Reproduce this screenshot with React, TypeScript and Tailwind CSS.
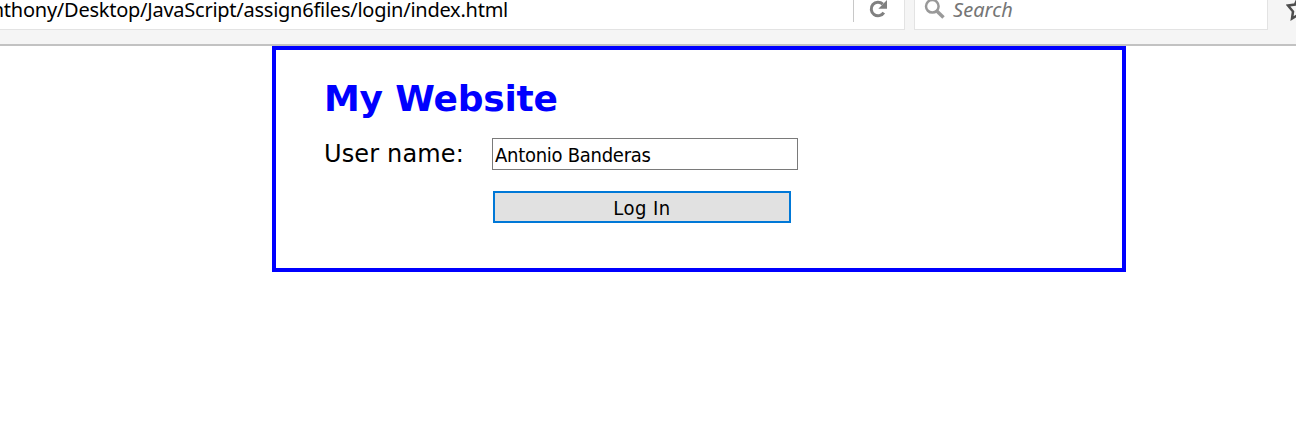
function Toolbar() {
  return (
    <header className="flex h-[46px] items-start overflow-hidden border-b-2 border-[#c2c2c2] bg-[#f5f5f5] font-['Noto_Sans',sans-serif] text-[20px] leading-[28px]">
      <div className="flex h-[30px] w-[905px] shrink-0 border-r border-b border-[#e3e3e3] bg-white">
        <div className="flex h-7 w-[508px] justify-end overflow-hidden whitespace-nowrap">
          <span className="-mt-[4px] tracking-[-0.25px] text-black">Anthony/Desktop/JavaScript/assign6files/login/index.html</span>
        </div>
        <div className="ml-auto flex h-[22px] w-[51px] border-l border-[#c8c8c8]">
          <svg className="ml-[15px] h-[20px] w-[20px]" viewBox="0 0 20 20" fill="none">
            <path d="M14.8 12.6A6.8 6.8 0 1 1 13.8 4.1" stroke="#808080" strokeWidth="3" />
            <path d="M18 0V8.7H9.3Z" fill="#808080" />
          </svg>
        </div>
      </div>
      <div className="ml-[9px] flex h-[30px] w-[354px] shrink-0 border-x border-b border-[#e3e3e3] bg-white">
        <svg className="ml-[9px] h-[20px] w-[22px] shrink-0" viewBox="0 0 22 20" fill="none" stroke="#999">
          <circle cx="8.3" cy="6.3" r="6.3" strokeWidth="2.5" />
          <path d="M12.8 11L19.5 17.5" strokeWidth="3.5" />
        </svg>
        <span className="-mt-[4px] ml-[7px] tracking-[0.05px] text-[#757575] italic">Search</span>
      </div>
      <svg className="ml-[18px] h-[24px] w-[24px] shrink-0" viewBox="0 0 24 24" fill="none" stroke="#4d4d4d" strokeWidth="2.5">
        <path d="M12 -2L15 4.5L22 5.3L17 11L18.5 18.5L12 15L6 18.5L7 11.5L2 5.5L9 4.5Z" />
      </svg>
    </header>
  );
}

export default function App() {
  return (
    <div className="h-[422px] overflow-hidden bg-white">
      <Toolbar />
      <main className="ml-[272px] h-[226px] w-[854px] border-4 border-[#0000ff] pt-[27px] pl-12 font-['DejaVu_Sans',sans-serif] text-black">
        <h1 className="h-[44px] text-[36px] leading-[44px] font-bold tracking-[-0.2px] whitespace-nowrap text-[#0000ff]">My Website</h1>
        <div className="mt-[17px] flex h-8 items-center">
          <label htmlFor="username" className="w-[168px] text-[24px] leading-8 tracking-[0.15px] whitespace-nowrap">User name:</label>
          <input
            id="username"
            defaultValue="Antonio Banderas"
            className="h-8 w-[306px] border border-[#7a7a7a] bg-white px-[2px] pt-[2px] font-['DejaVu_Sans_Condensed','DejaVu_Sans',sans-serif] text-[20px] tracking-[-0.27px] outline-none [font-stretch:condensed]"
          />
        </div>
        <button className="mt-[21px] ml-[169px] flex h-8 w-[298px] items-center justify-center border-2 border-[#0078d7] bg-[#e1e1e1] pt-px font-['DejaVu_Sans_Condensed','DejaVu_Sans',sans-serif] text-[20px] leading-7 tracking-[0.5px] [font-stretch:condensed]">
          Log In
        </button>
      </main>
    </div>
  );
}
